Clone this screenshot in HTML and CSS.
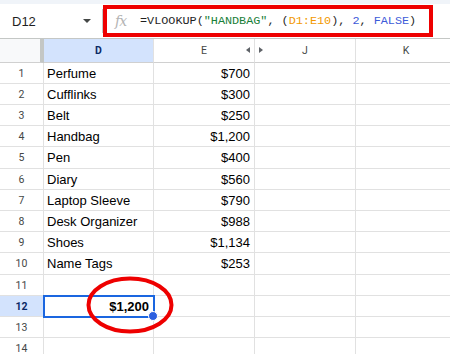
FILE: index.html
```html
<!DOCTYPE html>
<html lang="en">
<head>
    <meta charset="UTF-8">
    <title>VLOOKUP example</title>
    <link rel="stylesheet" href="styles.css">
</head>
<body>
    <div class="top-strip"></div>
    <div class="formula-bar">
        <div class="name-box">
            <span class="name-ref">D12</span>
            <span class="caret"></span>
        </div>
        <div class="bar-divider"></div>
        <div class="formula">
            <span class="fx">fx</span>
            <span class="code">=VLOOKUP(<span class="str">"HANDBAG"</span>, (<span class="rng">D1:E10</span>), <span class="num">2</span>, <span class="num">FALSE</span>)</span>
        </div>
    </div>

    <div class="sheet">
        <div class="row header-row">
            <div class="cell corner"></div>
            <div class="cell col-head active">D</div>
            <div class="cell col-head">E<span class="hide-left"></span></div>
            <div class="cell col-head"><span class="hide-right"></span>J</div>
            <div class="cell col-head">K</div>
        </div>
        <div class="row"><div class="cell row-head">1</div><div class="cell">Perfume</div><div class="cell num-cell">$700</div><div class="cell"></div><div class="cell"></div></div>
        <div class="row"><div class="cell row-head">2</div><div class="cell">Cufflinks</div><div class="cell num-cell">$300</div><div class="cell"></div><div class="cell"></div></div>
        <div class="row"><div class="cell row-head">3</div><div class="cell">Belt</div><div class="cell num-cell">$250</div><div class="cell"></div><div class="cell"></div></div>
        <div class="row"><div class="cell row-head">4</div><div class="cell">Handbag</div><div class="cell num-cell">$1,200</div><div class="cell"></div><div class="cell"></div></div>
        <div class="row tall"><div class="cell row-head">5</div><div class="cell">Pen</div><div class="cell num-cell">$400</div><div class="cell"></div><div class="cell"></div></div>
        <div class="row"><div class="cell row-head">6</div><div class="cell">Diary</div><div class="cell num-cell">$560</div><div class="cell"></div><div class="cell"></div></div>
        <div class="row"><div class="cell row-head">7</div><div class="cell">Laptop Sleeve</div><div class="cell num-cell">$790</div><div class="cell"></div><div class="cell"></div></div>
        <div class="row"><div class="cell row-head">8</div><div class="cell">Desk Organizer</div><div class="cell num-cell">$988</div><div class="cell"></div><div class="cell"></div></div>
        <div class="row"><div class="cell row-head">9</div><div class="cell">Shoes</div><div class="cell num-cell">$1,134</div><div class="cell"></div><div class="cell"></div></div>
        <div class="row tall"><div class="cell row-head">10</div><div class="cell">Name Tags</div><div class="cell num-cell">$253</div><div class="cell"></div><div class="cell"></div></div>
        <div class="row"><div class="cell row-head">11</div><div class="cell"></div><div class="cell"></div><div class="cell"></div><div class="cell"></div></div>
        <div class="row"><div class="cell row-head active">12</div><div class="cell num-cell result selected">$1,200<span class="fill-handle"></span></div><div class="cell"></div><div class="cell"></div><div class="cell"></div></div>
        <div class="row"><div class="cell row-head">13</div><div class="cell"></div><div class="cell"></div><div class="cell"></div><div class="cell"></div></div>
        <div class="row"><div class="cell row-head">14</div><div class="cell"></div><div class="cell"></div><div class="cell"></div><div class="cell"></div></div>

        <!-- annotation circle round the result -->
        <svg class="circle-mark" width="88" height="58" viewBox="0 0 88 58">
            <ellipse cx="44" cy="29" rx="41.5" ry="26.5" fill="none" stroke="#ee0000" stroke-width="4"/>
        </svg>
    </div>
</body>
</html>
```

FILE: styles.css
```css
body {
    margin: 0;
    font-family: "Liberation Sans", Arial, sans-serif;
    background: #fff;
    width: 450px;
    overflow: hidden;
}
.top-strip {
    height: 4px;
    background: #f0f4f9;
}
.formula-bar {
    display: flex;
    align-items: center;
    height: 35px;
    border-bottom: 1px solid #c4c7c5;
    box-sizing: border-box;
}
.name-box {
    width: 103px;
    display: flex;
    align-items: center;
    justify-content: space-between;
    padding: 0 12px 0 12px;
    box-sizing: border-box;
}
.name-ref {
    font-size: 13px;
    color: #1f1f1f;
}
.caret {
    width: 0;
    height: 0;
    border-left: 4px solid transparent;
    border-right: 4px solid transparent;
    border-top: 4px solid #444746;
}
.bar-divider {
    width: 1px;
    height: 24px;
    background: #c4c7c5;
    margin-left: -1px;
}
.formula {
    display: flex;
    align-items: center;
    width: 330px;
    height: 32px;
    box-sizing: border-box;
    border: 4px solid #ee0000;
    padding-left: 8px;
}
.fx {
    font-family: "DejaVu Serif", serif;
    font-style: italic;
    font-size: 14px;
    color: #b4b4b4;
    width: 25px;
    letter-spacing: -1px;
}
.code {
    font-family: "Liberation Mono", monospace;
    font-size: 11.8px;
    color: #1f1f1f;
    white-space: pre;
}
.str { color: #188038; }
.rng { color: #f29900; }
.num { color: #3d5bd9; }

.sheet {
    position: relative;
}
.row {
    display: grid;
    grid-template-columns: 44px 110px 101px 101px 101px;
    height: 21px;
}
.row.tall {
    height: 22px;
}
.header-row {
    height: 24px;
}
.cell {
    box-sizing: border-box;
    border-right: 1px solid #e1e1e1;
    border-bottom: 1px solid #e1e1e1;
    font-size: 13px;
    color: #000;
    padding: 0 3px;
    display: flex;
    align-items: center;
    white-space: nowrap;
    position: relative;
}
.corner {
    background: #f8f9fa;
    border-right: 4px solid #c4c7c5;
}
.col-head, .row-head {
    font-family: Roboto, "Liberation Sans", sans-serif;
    font-size: 10.5px;
    color: #444746;
    justify-content: center;
}
.header-row .cell {
    border-bottom-color: #d0d0d0;
}
.col-head.active, .row-head.active {
    background: #d3e3fd;
    color: #0b2a66;
    font-weight: bold;
}
.num-cell {
    justify-content: flex-end;
    padding-right: 4px;
}
.hide-left, .hide-right {
    position: absolute;
    top: 8px;
    width: 0;
    height: 0;
    border-top: 3.5px solid transparent;
    border-bottom: 3.5px solid transparent;
}
.hide-left {
    right: 4px;
    border-right: 4px solid #5f6368;
}
.hide-right {
    left: 4px;
    border-left: 4px solid #5f6368;
}
.result {
    font-weight: bold;
}
.selected {
    outline: 2px solid #1a66e0;
    outline-offset: -1px;
    z-index: 1;
}
.fill-handle {
    position: absolute;
    right: -5px;
    bottom: -5px;
    width: 8px;
    height: 8px;
    border-radius: 50%;
    background: #2b5fe0;
    border: 1px solid #fff;
}
.circle-mark {
    position: absolute;
    left: 86px;
    top: 237px;
    z-index: 2;
}
```
